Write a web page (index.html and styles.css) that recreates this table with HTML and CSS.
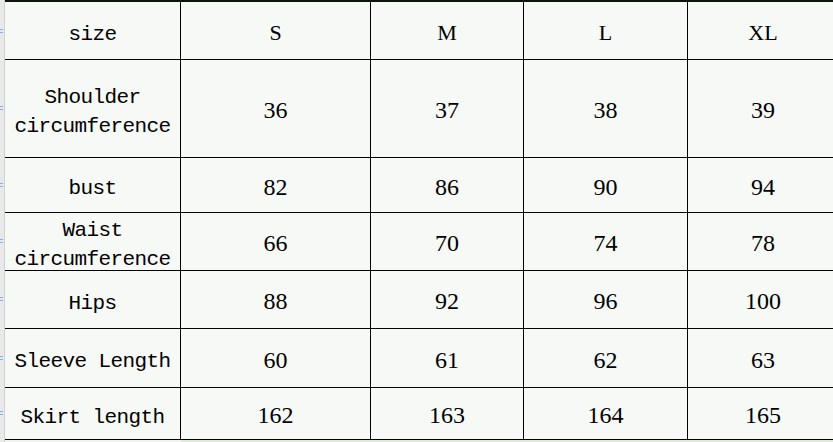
FILE: index.html
```html
<!DOCTYPE html>
<html>
<head>
<meta charset="utf-8">
<link rel="stylesheet" href="styles.css">
</head>
<body>
<div class="sheet">
  <div class="gutter">
    <span class="mark m1"></span>
    <span class="mark m2"></span>
    <span class="mark m3"></span>
    <span class="mark m4"></span>
    <span class="mark m5"></span>
    <span class="mark m6"></span>
    <span class="mark m7"></span>
  </div>
  <div class="grid-wrap">
    <div class="size-grid">
      <div class="cell label">size</div>
      <div class="cell hd">S</div>
      <div class="cell hd">M</div>
      <div class="cell hd">L</div>
      <div class="cell hd">XL</div>

      <div class="cell label">Shoulder circumference</div>
      <div class="cell">36</div><div class="cell">37</div><div class="cell">38</div><div class="cell">39</div>

      <div class="cell label">bust</div>
      <div class="cell">82</div><div class="cell">86</div><div class="cell">90</div><div class="cell">94</div>

      <div class="cell label">Waist circumference</div>
      <div class="cell">66</div><div class="cell">70</div><div class="cell">74</div><div class="cell">78</div>

      <div class="cell label">Hips</div>
      <div class="cell">88</div><div class="cell">92</div><div class="cell">96</div><div class="cell">100</div>

      <div class="cell label">Sleeve Length</div>
      <div class="cell">60</div><div class="cell">61</div><div class="cell">62</div><div class="cell">63</div>

      <div class="cell label">Skirt length</div>
      <div class="cell">162</div><div class="cell">163</div><div class="cell">164</div><div class="cell">165</div>
    </div>
    <div class="bottom-strip">
      <div class="bs-left"></div>
      <div class="bs-right"></div>
    </div>
  </div>
</div>
</body>
</html>
```
FILE: styles.css
```css
html, body {
  margin: 0;
  padding: 0;
  width: 833px;
  height: 442px;
  overflow: hidden;
  background: #f7f9f7;
}

.sheet {
  display: flex;
  height: 442px;
}

.gutter {
  position: relative;
  width: 4px;
  flex: 0 0 4px;
  background: #e8e9e8;
  border-right: 1px solid #cfd0cf;
}

.mark {
  position: absolute;
  left: 0;
  width: 2px;
  height: 4px;
  border-top: 1px dotted #7fb2e6;
  border-bottom: 1px dotted #7fb2e6;
  box-sizing: border-box;
}
.m1 { top: 29px; }
.m2 { top: 106px; }
.m3 { top: 183px; }
.m4 { top: 239px; }
.m5 { top: 297px; }
.m6 { top: 356px; }
.m7 { top: 411px; }

.grid-wrap {
  flex: 0 0 auto;
  width: 828px;
  overflow: hidden;
}

.size-grid {
  display: grid;
  grid-template-columns: 175px 189px 152px 163px 150px;
  grid-template-rows: 57px 97px 54px 57px 57px 58px 51px;
  column-gap: 1px;
  row-gap: 1px;
  padding: 2px 0 1px 0;
  width: max-content;
  background: linear-gradient(#0c140c, #0c140c) top / 100% 2px no-repeat, #000;
}

.cell {
  background: #f7f9f7;
  display: flex;
  align-items: center;
  justify-content: center;
  text-align: center;
  box-sizing: border-box;
  padding-top: 4px;
  font-family: "Liberation Serif", "Times New Roman", serif;
  font-size: 24px;
  line-height: 29px;
  color: #000;
  overflow: visible;
}

.cell.label {
  font-family: "Liberation Mono", "Courier New", monospace;
  font-size: 21px;
  letter-spacing: -0.6px;
  padding: 7px 2px 0 2px;
}

.cell.hd {
  font-size: 22px;
}

.bottom-strip {
  display: flex;
  height: 4px;
}
.bs-left {
  width: 176px;
  background: #f1f3f1;
}
.bs-right {
  flex: 1;
  background: #dcecd9;
}
```
